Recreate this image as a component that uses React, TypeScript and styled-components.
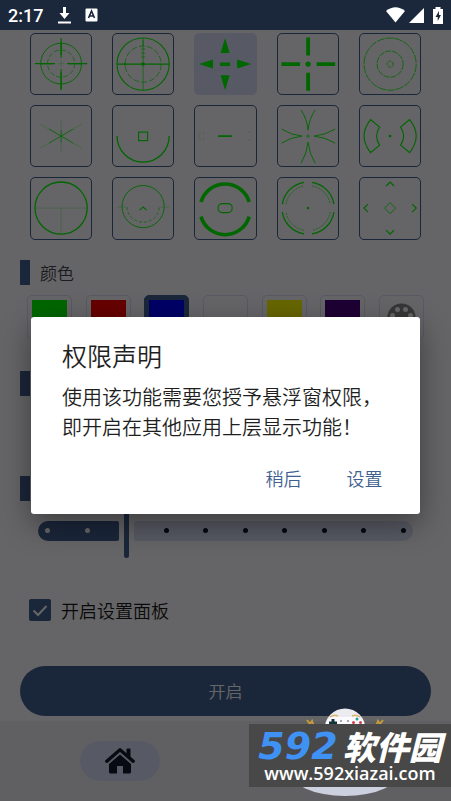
import React, { useState } from "react";
import styled, { createGlobalStyle } from "styled-components";

const GlobalStyle = createGlobalStyle`
  * { box-sizing: border-box; }
  body {
    margin: 0;
    background: #656466;
    font-family: Roboto, "Noto Sans CJK SC", sans-serif;
    font-weight: 350;
  }
  button { font-family: inherit; font-weight: inherit; border: 0; background: none; padding: 0; cursor: pointer; }
  h1, h2, p { margin: 0; font-weight: inherit; }
`;

const primary = "#415f91";
const green = "#00ff00";

const Page = styled.div`
  position: relative;
  min-height: 100vh;
  display: flex;
  flex-direction: column;
  background: #fdfbff;
  overflow: hidden;
`;

const StatusBar = styled.header`
  position: relative;
  z-index: 3;
  height: 30px;
  flex: none;
  display: flex;
  align-items: center;
  padding: 0 8px;
  background: #1b273a;
  color: #fff;
  font-size: 18px;
  font-weight: 500;
`;

const StatusGroup = styled.div<{ $gap: number; $end?: boolean }>`
  display: flex;
  align-items: center;
  gap: ${(p) => p.$gap}px;
  margin-left: ${(p) => (p.$end ? "auto" : "15px")};
  svg { display: block; }
`;

const Main = styled.main`
  flex: 1;
  display: flex;
  flex-direction: column;
`;

const ReticleGrid = styled.div`
  display: grid;
  grid-template-columns: repeat(5, 1fr);
  column-gap: 20px;
  row-gap: 10px;
  padding: 3px 30px 0;
`;

const ReticleCell = styled.button<{ $selected: boolean }>`
  aspect-ratio: 1;
  border-radius: 5px;
  border: 1px solid ${(p) => (p.$selected ? "#dae2f9" : primary)};
  background: ${(p) => (p.$selected ? "#dae2f9" : "transparent")};
  svg { display: block; width: 100%; height: 100%; }
`;

const Section = styled.section<{ $height: number }>`
  min-height: ${(p) => p.$height}px;
  padding-top: 20px;
`;

const SectionHeading = styled.h2`
  display: flex;
  align-items: center;
  gap: 10px;
  height: 25px;
  padding-left: 20px;
  font-size: 17px;
  color: #44474e;
  &::before {
    content: "";
    width: 10px;
    height: 25px;
    background: ${primary};
  }
`;

const Swatches = styled.div`
  display: flex;
  justify-content: space-between;
  padding: 10px 27px 0;
`;

const Swatch = styled.button<{ $color: string; $selected: boolean }>`
  width: 45px;
  height: 45px;
  padding: 4px;
  border-radius: 5px;
  border: 1px solid ${(p) => (p.$selected ? primary : "#dae2f9")};
  background: ${(p) => (p.$selected ? primary : "transparent")};
  display: flex;
  align-items: center;
  justify-content: center;
  &::before {
    content: "";
    display: ${(p) => (p.$color ? "block" : "none")};
    width: 35px;
    height: 35px;
    background: ${(p) => p.$color};
  }
`;

const SliderBox = styled.div`
  display: grid;
  align-items: center;
  margin: 3px 38px 0;
  > * { grid-area: 1 / 1; }
`;

const Rail = styled.div`
  display: flex;
  align-items: center;
  gap: 5px;
`;

const RailPart = styled.div<{ $active?: boolean }>`
  height: 20px;
  flex: ${(p) => (p.$active ? "none" : "1")};
  width: ${(p) => (p.$active ? "calc((100% - 20px) * 2 / 9 + 2px)" : "auto")};
  border-radius: ${(p) => (p.$active ? "10px 2px 2px 10px" : "2px 10px 10px 2px")};
  background: ${(p) => (p.$active ? primary : "#dae2f9")};
`;

const Thumb = styled.div`
  width: 5px;
  height: 54px;
  border-radius: 3px;
  background: ${primary};
`;

const Ticks = styled.div`
  display: flex;
  justify-content: space-between;
  padding: 0 7px;
`;

const Tick = styled.span<{ $light: boolean; $hidden: boolean }>`
  width: 5px;
  height: 5px;
  border-radius: 50%;
  visibility: ${(p) => (p.$hidden ? "hidden" : "visible")};
  background: ${(p) => (p.$light ? "#fff" : "#0c1424")};
`;

const Range = styled.input`
  width: 100%;
  height: 54px;
  margin: 0;
  opacity: 0;
`;

const CheckLabel = styled.label`
  display: flex;
  align-items: center;
  gap: 10px;
  height: 30px;
  margin: 37px 29px 0;
  font-size: 18px;
  color: #1a1b20;
`;

const CheckBox = styled.span`
  display: grid;
  width: 22px;
  height: 22px;
  > * { grid-area: 1 / 1; width: 22px; height: 22px; }
  svg { pointer-events: none; }
`;

const CheckInput = styled.input`
  appearance: none;
  margin: 0;
  border-radius: 2px;
  border: 2px solid ${primary};
  &:checked { background: ${primary}; }
`;

const StartButton = styled.button`
  height: 50px;
  flex: none;
  margin: 41px 20px 5px;
  border-radius: 25px;
  background: ${primary};
  color: #fff;
  font-size: 17px;
`;

const NavBar = styled.nav`
  height: 80px;
  flex: none;
  display: grid;
  grid-template-columns: 1fr 1fr;
  align-items: center;
  justify-items: center;
  padding: 0 7px;
  background: #f1eff4;
`;

const NavItem = styled.button`
  width: 80px;
  height: 40px;
  margin-left: 8px;
  border-radius: 20px;
  background: #dae2f9;
  display: flex;
  align-items: center;
  justify-content: center;
`;

const Scrim = styled.div`
  position: absolute;
  inset: 30px 0 0;
  z-index: 1;
  display: flex;
  align-items: center;
  justify-content: center;
  padding: 0 31px;
  background: rgba(0, 0, 0, 0.6);
`;

const Dialog = styled.div`
  flex: 1;
  padding: 26px 31px 16px;
  border-radius: 3px;
  background: #fff;
  box-shadow: 0 10px 30px rgba(0, 0, 0, 0.4);
`;

const DialogTitle = styled.h1`
  font-size: 25px;
  line-height: 30px;
  color: #1f1f1f;
`;

const DialogText = styled.p`
  margin-top: 10px;
  font-size: 20px;
  line-height: 30px;
  color: #1f1f1f;
  white-space: pre-line;
`;

const DialogActions = styled.div`
  display: flex;
  justify-content: flex-end;
  gap: 20px;
  margin: 15px -6px 0 0;
`;

const TextButton = styled.button`
  width: 61px;
  height: 40px;
  font-size: 18px;
  color: ${primary};
`;

const Mascot = styled.svg`
  position: absolute;
  z-index: 2;
  right: 56px;
  bottom: 4px;
`;

const Watermark = styled.a`
  position: absolute;
  z-index: 3;
  right: 0;
  bottom: 14px;
  width: 202px;
  height: 63px;
  padding: 5px 0;
  background: #484848;
  color: #fff;
  text-decoration: none;
  display: flex;
  flex-direction: column;
  align-items: center;
  justify-content: space-between;
`;

const Brand = styled.span`
  display: flex;
  align-items: center;
  gap: 5px;
  height: 34px;
  font: italic 900 33px/34px "Noto Sans CJK SC", sans-serif;
`;

const BrandNumber = styled.b`
  font: italic 700 38px/34px "DejaVu Sans", sans-serif;
  color: #3f91f3;
`;

const Url = styled.span`
  font: 600 18px/18px "Open Sans", "Noto Sans", sans-serif;
`;

const thin = { strokeWidth: 0.7 };
const faint = { strokeWidth: 0.5, opacity: 0.5 };

const reticles: { name: string; art: React.ReactNode }[] = [
  {
    name: "双圈十字",
    art: (
      <>
        <circle cx="31" cy="30.5" r="20.3" strokeWidth="0.9" />
        <circle cx="31" cy="30.5" r="13.5" {...thin} strokeDasharray="5 2" />
        <path d="M5 30.5h20M37 30.5h20M31 5v20M31 36v21" />
        <path d="M10 30.5h13M39 30.5h13M31 9v13M31 39v17" strokeWidth="1.3" />
        <path d="M28 30.5h6M31 27.5v6" {...faint} />
      </>
    ),
  },
  {
    name: "狙击镜",
    art: (
      <>
        <circle cx="31" cy="31" r="26" />
        <circle cx="31" cy="31" r="18" {...thin} strokeDasharray="6 2" />
        <path d="M5 31h52" />
        <path d="M31 5v52M31 7v6M29 16h4M29 20h4M29 24h4M13 29v4" {...thin} />
        <circle cx="31" cy="31" r="1.8" fill={green} stroke="none" />
      </>
    ),
  },
  {
    name: "四向箭头",
    art: (
      <path
        d="M5 31l14-4.5v9zM57 31l-14-4.5v9zM31 5l4.5 15h-9zM31 57l4.5-15h-9zM26 29.5h10v3.5h-10z"
        fill={green}
        stroke="none"
      />
    ),
  },
  {
    name: "粗十字",
    art: (
      <>
        <path d="M4.5 31H23M39.5 31H58M31 4.5V22.5M31 39.5V57.5" strokeWidth="3.8" />
        <circle cx="31" cy="31" r="2.6" fill={green} stroke="none" />
      </>
    ),
  },
  {
    name: "同心圆",
    art: (
      <g strokeWidth="0.8">
        <circle cx="31" cy="31" r="26" strokeDasharray="8 1" />
        <circle cx="31" cy="31" r="13" strokeDasharray="6 1" />
        <circle cx="31" cy="31" r="3" strokeDasharray="3 1" />
      </g>
    ),
  },
  {
    name: "星形",
    art: (
      <>
        <path d="M10 19L52 43M10 43L52 19M31 15V47" {...faint} />
        <path d="M19 24L43 38M19 38L43 24M31 25V37" {...thin} />
      </>
    ),
  },
  {
    name: "半圆方块",
    art: (
      <>
        <path d="M5 31a26 26 0 0 0 52 0" strokeWidth="1.3" />
        <rect x="26.5" y="27" width="9" height="8.5" />
      </>
    ),
  },
  {
    name: "横线",
    art: (
      <>
        <path d="M24 31h14" strokeWidth="1.7" />
        <path d="M4 28h3M4 31h2M4 34h3M9 28h2M9 34h2M54 27h2M57 31h1M54 35h2" {...faint} />
      </>
    ),
  },
  {
    name: "四叶",
    art: (
      <>
        <path
          d="M24 5Q30 14 31 25Q32 14 38 5M24 58Q30 48 31 37Q32 48 38 58M4.5 24Q14 30 25 31Q14 32 4.5 38M58 24Q48 30 37 31Q48 32 58 38"
          strokeWidth="0.9"
        />
        <circle cx="31" cy="31" r="1.2" strokeWidth="0.7" />
      </>
    ),
  },
  {
    name: "双弧块",
    art: (
      <>
        <path d="M11.5 14.5L20.5 22Q14.5 31 20.5 40L11.5 47.5Q-1.5 31 11.5 14.5zM50.5 14.5L41.5 22Q47.5 31 41.5 40L50.5 47.5Q63.5 31 50.5 14.5z" />
        <circle cx="31" cy="31" r="1.4" fill={green} stroke="none" />
      </>
    ),
  },
  {
    name: "大圆",
    art: (
      <>
        <circle cx="31" cy="31" r="26" strokeWidth="1.3" />
        <path d="M6 31h50M31 31v25" {...faint} />
      </>
    ),
  },
  {
    name: "圆与尖角",
    art: (
      <>
        <circle cx="31" cy="29.5" r="21" strokeWidth="0.9" />
        <path d="M15 30a16 15 0 0 0 32 0" {...thin} strokeDasharray="3 2" />
        <path d="M27.5 33L31 30L34.5 33" />
        <path d="M5 30h9M48 30h9" {...faint} />
      </>
    ),
  },
  {
    name: "粗弧",
    art: (
      <>
        <path d="M7 25A25 25 0 0 1 55 25M7 39.5A25 25 0 0 0 55 39.5" strokeWidth="3.6" />
        <rect x="24" y="26.5" width="14" height="9" rx="4" />
      </>
    ),
  },
  {
    name: "四段圆",
    art: (
      <>
        <path
          d="M5.3 27A26 26 0 0 1 27 5.3M35 5.3A26 26 0 0 1 56.7 27M56.7 35A26 26 0 0 1 35 56.7M27 56.7A26 26 0 0 1 5.3 35"
          strokeWidth="1.3"
        />
        <path
          d="M9 27A22 22 0 0 1 27 9M35 9A22 22 0 0 1 53 27M53 35A22 22 0 0 1 35 53M27 53A22 22 0 0 1 9 35"
          {...thin}
          strokeDasharray="2 1"
        />
        <circle cx="31" cy="31" r="1.3" fill={green} stroke="none" />
      </>
    ),
  },
  {
    name: "菱形箭头",
    art: (
      <>
        <path d="M27 9l4-4l4 4M27 53l4 4l4-4M9 27l-4 4l4 4M53 27l4 4l-4 4" strokeWidth="1.2" />
        <path d="M31 25.5l5.5 5.5l-5.5 5.5l-5.5-5.5z" strokeWidth="0.8" />
      </>
    ),
  },
];

const swatches = [
  { name: "绿色", color: "#00ff00" },
  { name: "红色", color: "#ff0000" },
  { name: "蓝色", color: "#0000ff" },
  { name: "白色", color: "#fdfbff" },
  { name: "黄色", color: "#ffff00" },
  { name: "紫色", color: "#4b0082" },
  { name: "自定义", color: "" },
];

const PaletteIcon = () => (
  <svg width="29" height="29" viewBox="0 0 29 29" aria-hidden="true">
    <circle cx="14.5" cy="14.5" r="14" fill="#8a8a8a" />
    <g fill="#fdfbff">
      <circle cx="10.5" cy="6.5" r="2.5" />
      <circle cx="18.5" cy="6.5" r="2.5" />
      <circle cx="5.5" cy="12.5" r="2.5" />
      <circle cx="23.5" cy="12.5" r="2.5" />
    </g>
  </svg>
);

const HomeIcon = () => (
  <svg width="30" height="26" viewBox="0 0 30 26" aria-hidden="true" fill="#131c2b">
    <path d="M15 6.5L4 16V24a1.5 1.5 0 0 0 1.5 1.5H12V18h6v7.5h6.5A1.5 1.5 0 0 0 26 24V16z" />
    <path d="M1.8 13.2L15 1.8L28.2 13.2" fill="none" stroke="#dae2f9" strokeWidth="6" />
    <path
      d="M1.8 13.2L15 1.8L28.2 13.2"
      fill="none"
      stroke="#131c2b"
      strokeWidth="3.4"
      strokeLinecap="round"
      strokeLinejoin="round"
    />
    <path d="M21.5 1.5a1 1 0 0 1 1-1h2a1 1 0 0 1 1 1v9l-4-3.5z" />
  </svg>
);

export default function App() {
  const [reticle, setReticle] = useState(2);
  const [color, setColor] = useState(2);
  const [panel, setPanel] = useState(true);

  return (
    <Page>
      <GlobalStyle />
      <StatusBar>
        <span>2:17</span>
        <StatusGroup $gap={14}>
          <svg width="13" height="18" viewBox="0 0 13 18" aria-hidden="true" fill="#fff">
            <path d="M5 1h3v6h3.5L6.5 13L1.5 7H5zM0 15.5h13v2H0z" />
          </svg>
          <svg width="13" height="14" viewBox="0 0 13 14" aria-hidden="true">
            <rect x="0.5" y="0.5" width="12" height="13" rx="1" fill="#fff" />
            <path d="M3.5 10L6.5 3L9.5 10M4.5 8h4" fill="none" stroke="#1b273a" strokeWidth="1.6" />
          </svg>
        </StatusGroup>
        <StatusGroup $gap={4} $end>
          <svg width="19" height="16" viewBox="0 0 19 16" aria-hidden="true">
            <path d="M0 4Q9.5-3.5 19 4L9.5 15.5z" fill="#fff" />
          </svg>
          <svg width="15" height="15" viewBox="0 0 15 15" aria-hidden="true">
            <path d="M15 0V15H0z" fill="#fff" />
          </svg>
          <svg width="15" height="17" viewBox="0 0 15 17" aria-hidden="true">
            <path d="M5 2h2.500V0h5v2H15v15H5z" fill="#fff" />
            <path d="M11 4L7.5 10h2.200v4L13 8h-2z" fill="#1b273a" />
          </svg>
        </StatusGroup>
      </StatusBar>

      <Main>
        <ReticleGrid>
          {reticles.map((r, i) => (
            <ReticleCell key={r.name} $selected={i === reticle} aria-label={r.name} onClick={() => setReticle(i)}>
              <svg viewBox="1 1 60 60" fill="none" stroke={green} strokeWidth="1.1">
                {r.art}
              </svg>
            </ReticleCell>
          ))}
        </ReticleGrid>

        <Section $height={111}>
          <SectionHeading>颜色</SectionHeading>
          <Swatches>
            {swatches.map((s, i) => (
              <Swatch
                key={s.name}
                $color={s.color}
                $selected={i === color}
                aria-label={s.name}
                onClick={() => setColor(i)}
              >
                {s.color ? null : <PaletteIcon />}
              </Swatch>
            ))}
          </Swatches>
        </Section>

        <Section $height={105}>
          <SectionHeading />
        </Section>

        <Section $height={100}>
          <SectionHeading />
          <SliderBox>
            <Rail>
              <RailPart $active />
              <Thumb />
              <RailPart />
            </Rail>
            <Ticks>
              {Array.from({ length: 10 }, (_, i) => (
                <Tick key={i} $light={i < 2} $hidden={i === 2} />
              ))}
            </Ticks>
            <Range type="range" min={0} max={9} defaultValue={2} aria-label="大小" />
          </SliderBox>
        </Section>

        <CheckLabel>
          <CheckBox>
            <CheckInput type="checkbox" checked={panel} onChange={(e) => setPanel(e.target.checked)} />
            <svg viewBox="0 0 22 22" aria-hidden="true">
              {panel && <path d="M4.5 11.5L9 16L17.5 7" fill="none" stroke="#fff" strokeWidth="2" />}
            </svg>
          </CheckBox>
          开启设置面板
        </CheckLabel>
        <StartButton>开启</StartButton>
      </Main>

      <NavBar>
        <NavItem aria-label="首页">
          <HomeIcon />
        </NavItem>
      </NavBar>

      <Scrim>
        <Dialog role="dialog" aria-labelledby="dialog-title">
          <DialogTitle id="dialog-title">权限声明</DialogTitle>
          <DialogText>{"使用该功能需要您授予悬浮窗权限，\n即开启在其他应用上层显示功能！"}</DialogText>
          <DialogActions>
            <TextButton>稍后</TextButton>
            <TextButton>设置</TextButton>
          </DialogActions>
        </Dialog>
      </Scrim>

      <Mascot width="100" height="89" viewBox="0 0 100 89" aria-hidden="true">
        <ellipse cx="50" cy="62" rx="56" ry="26" fill="#cdd0df" />
        <path d="M12 12l3 4l2-3l2 6M88 12l-3 4l-2-3l-2 6" fill="none" stroke="#c79a3a" strokeWidth="2" />
        <circle cx="50" cy="21" r="20.5" fill="#ececf0" />
        <rect x="31" y="9" width="38" height="18" rx="8" fill="#fbfbfd" />
        <path d="M35 9q4-3 8-1M57 8q4-2 8 1" fill="none" stroke="#d9b469" strokeWidth="1.5" />
        <path d="M38 11v8M34 15h8" stroke="#12343b" strokeWidth="3" />
        <path d="M45 13h2M52 13h2" stroke="#555" />
        <circle cx="62" cy="11" r="1.5" fill="#2aa198" />
        <circle cx="58.5" cy="14.5" r="1.5" fill="#d8394a" />
        <circle cx="65.5" cy="14.5" r="1.5" fill="#d8394a" />
      </Mascot>
      <Watermark href="#">
        <Brand>
          <BrandNumber>592</BrandNumber>软件园
        </Brand>
        <Url>www.592xiazai.com</Url>
      </Watermark>
    </Page>
  );
}
